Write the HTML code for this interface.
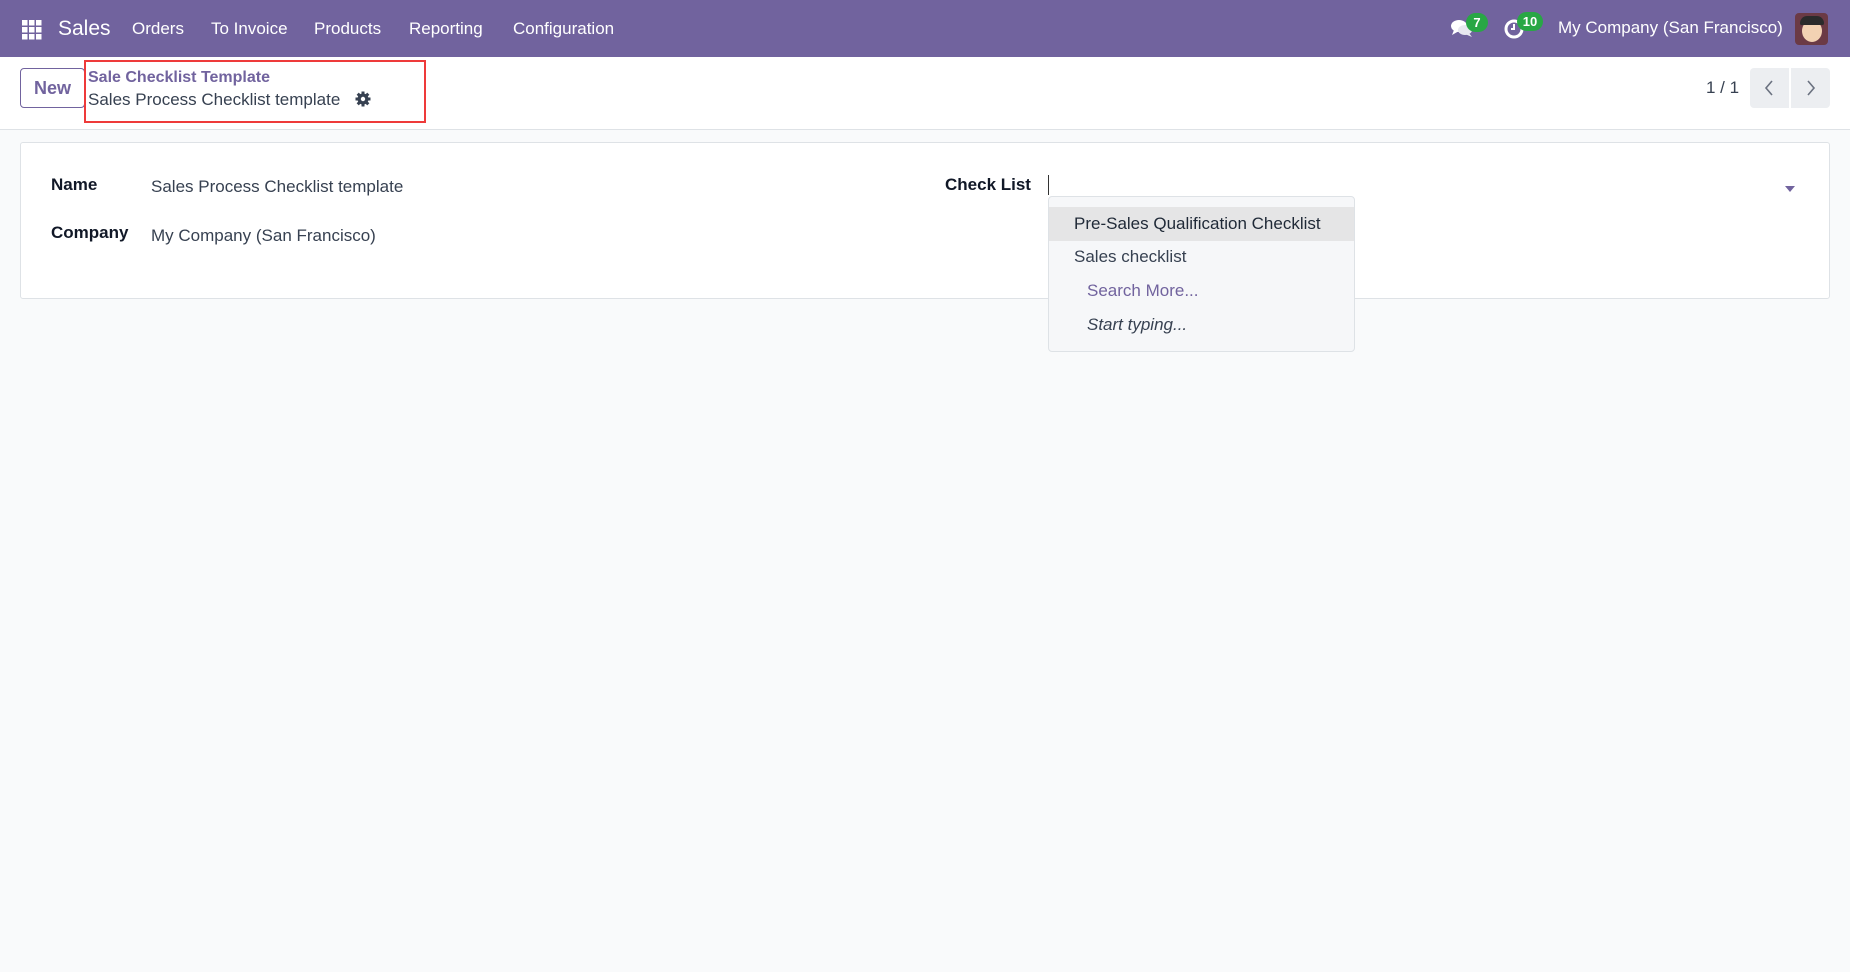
<!DOCTYPE html>
<html><head><meta charset="utf-8"><style>
*{box-sizing:border-box;margin:0;padding:0}
body{width:1850px;height:972px;background:#f9fafb;font-family:"Liberation Sans",sans-serif;color:#374151;position:relative;overflow:hidden}
.nav{position:absolute;left:0;top:0;width:1850px;height:57px;background:#71639e;color:#fff}
.a{position:absolute;white-space:nowrap}
.cp{position:absolute;left:0;top:57px;width:1850px;height:73px;background:#fff;border-bottom:1px solid #dee2e6}
.card{position:absolute;left:20px;top:142px;width:1810px;height:157px;background:#fff;border:1px solid #dee2e6;border-radius:3px}
.lbl{font-weight:bold;font-size:17px;color:#111827}
.v{font-size:17px;color:#374151}
</style></head><body>
<div class="nav">
 <svg class="a" style="left:22px;top:20px" width="20" height="20" viewBox="0 0 20 20" fill="#fff"><rect x="0" y="0" width="5.5" height="5.5"/><rect x="7" y="0" width="5.5" height="5.5"/><rect x="14" y="0" width="5.5" height="5.5"/><rect x="0" y="7" width="5.5" height="5.5"/><rect x="7" y="7" width="5.5" height="5.5"/><rect x="14" y="7" width="5.5" height="5.5"/><rect x="0" y="14" width="5.5" height="5.5"/><rect x="7" y="14" width="5.5" height="5.5"/><rect x="14" y="14" width="5.5" height="5.5"/></svg>
 <div class="a" style="left:58px;top:17px;font-size:21px">Sales</div>
 <div class="a" style="left:132px;top:19px;font-size:17px">Orders</div>
 <div class="a" style="left:211px;top:19px;font-size:17px">To Invoice</div>
 <div class="a" style="left:314px;top:19px;font-size:17px">Products</div>
 <div class="a" style="left:409px;top:19px;font-size:17px">Reporting</div>
 <div class="a" style="left:513px;top:19px;font-size:17px">Configuration</div>
 <svg class="a" style="left:1450px;top:18px" width="24" height="20" viewBox="0 0 24 20" fill="#fff"><ellipse cx="9" cy="8" rx="8" ry="6"/><path d="M4 12 L2 17 L9 13Z"/><ellipse cx="15" cy="12" rx="7" ry="5" fill="#e8e8f0"/><path d="M19 15 L22 19 L15 16Z" fill="#e8e8f0"/></svg>
 <div class="a" style="left:1466px;top:13px;width:22px;height:19px;border-radius:10px;background:#28a745;font-size:13px;font-weight:bold;text-align:center;line-height:19px">7</div>
 <svg class="a" style="left:1503px;top:18px" width="22" height="22" viewBox="0 0 22 22"><circle cx="11" cy="11" r="8" fill="none" stroke="#fff" stroke-width="3"/><path d="M11 6V11H8" stroke="#fff" stroke-width="2" fill="none"/></svg>
 <div class="a" style="left:1517px;top:12px;width:26px;height:19px;border-radius:10px;background:#28a745;font-size:13px;font-weight:bold;text-align:center;line-height:19px">10</div>
 <div class="a" style="left:1558px;top:18px;font-size:17px">My Company (San Francisco)</div>
 <div class="a" style="left:1795px;top:13px;width:33px;height:32px;border-radius:4px;background:#6b3a45;overflow:hidden"><div style="position:absolute;left:7px;top:7px;width:20px;height:22px;border-radius:50%;background:#f3d2b3"></div><div style="position:absolute;left:5px;top:3px;width:24px;height:9px;border-radius:8px 8px 2px 2px;background:#2b2b2b"></div></div>
</div>
<div class="cp">
 <div class="a" style="left:20px;top:11px;width:65px;height:40px;border:1px solid #71639e;border-radius:4px;color:#71639e;font-size:18px;font-weight:bold;text-align:center;line-height:38px">New</div>
 <div class="a" style="left:84px;top:3px;width:342px;height:63px;border:2px solid #ee3a3a"></div>
 <div class="a" style="left:88px;top:12px;font-size:16px;font-weight:bold;color:#71639e">Sale Checklist Template</div>
 <div class="a" style="left:88px;top:33px;font-size:17px;color:#374151">Sales Process Checklist template</div>
 <svg class="a" style="left:355px;top:34px" width="16" height="16" viewBox="0 0 16 16"><g fill="#374151"><circle cx="8" cy="8" r="5.5"/><rect x="6.5" y="0.5" width="3" height="15"/><rect x="0.5" y="6.5" width="15" height="3"/><rect x="6.5" y="0.5" width="3" height="15" transform="rotate(45 8 8)"/><rect x="6.5" y="0.5" width="3" height="15" transform="rotate(-45 8 8)"/></g><circle cx="8" cy="8" r="2.2" fill="#fff"/></svg>
 <div class="a" style="left:1706px;top:21px;font-size:17px">1 / 1</div>
 <div class="a" style="left:1750px;top:11px;width:39px;height:40px;background:#eceef1;border-radius:4px 0 0 4px"><svg style="position:absolute;left:13px;top:12px" width="12" height="16" viewBox="0 0 12 16"><path d="M9 1 L3 8 L9 15" fill="none" stroke="#6b7280" stroke-width="1.6"/></svg></div>
 <div class="a" style="left:1791px;top:11px;width:39px;height:40px;background:#eceef1;border-radius:0 4px 4px 0"><svg style="position:absolute;left:14px;top:12px" width="12" height="16" viewBox="0 0 12 16"><path d="M3 1 L9 8 L3 15" fill="none" stroke="#6b7280" stroke-width="1.6"/></svg></div>
</div>
<div class="card"></div>
<div class="a lbl" style="left:51px;top:175px">Name</div>
<div class="a v" style="left:151px;top:177px">Sales Process Checklist template</div>
<div class="a lbl" style="left:51px;top:223px">Company</div>
<div class="a v" style="left:151px;top:226px">My Company (San Francisco)</div>
<div class="a lbl" style="left:945px;top:175px">Check List</div>
<div class="a" style="left:1048px;top:175px;width:1px;height:20px;background:#333"></div>
<div class="a" style="left:1785px;top:186px;width:0;height:0;border-left:5px solid transparent;border-right:5px solid transparent;border-top:6px solid #71639e"></div>
<div class="a" style="left:1048px;top:196px;width:307px;height:156px;background:#f6f7f9;border:1px solid #dee2e6;border-radius:4px">
 <div style="position:absolute;left:0;top:10px;width:305px;height:34px;background:#e5e5e6"></div>
 <div class="a" style="left:25px;top:17px;font-size:17px;color:#1f2937">Pre-Sales Qualification Checklist</div>
 <div class="a" style="left:25px;top:50px;font-size:17px">Sales checklist</div>
 <div class="a" style="left:38px;top:84px;font-size:17px;color:#71639e">Search More...</div>
 <div class="a" style="left:38px;top:118px;font-size:17px;font-style:italic">Start typing...</div>
</div>
</body></html>
